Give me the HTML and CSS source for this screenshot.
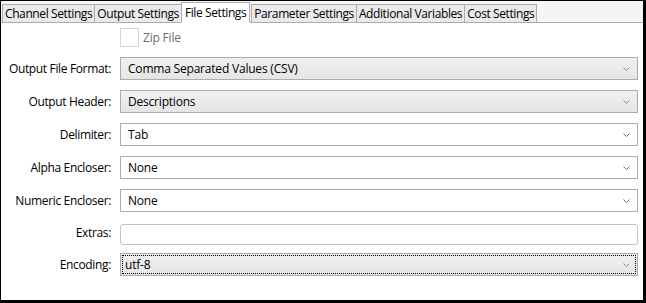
FILE: index.html
```html
<!DOCTYPE html>
<html lang="en">
<head>
  <meta charset="UTF-8">
  <title>File Settings</title>
  <link rel="stylesheet" href="styles.css">
</head>
<body>
  <div class="window">
    <div class="tabs">
      <div class="tab">Channel Settings</div>
      <div class="tab">Output Settings</div>
      <div class="tab active">File Settings</div>
      <div class="tab">Parameter Settings</div>
      <div class="tab">Additional Variables</div>
      <div class="tab">Cost Settings</div>
    </div>

    <div class="panel">
      <div class="form">
        <span></span>
        <label class="check"><span class="box"></span>Zip File</label>

        <span class="lbl">Output File Format:</span>
        <div class="combo disabled">Comma Separated Values (CSV)<svg class="arrow" width="7" height="4" viewBox="0 0 7 4"><polyline points="0.5,0.5 3.5,3.5 6.5,0.5" fill="none" stroke="#8a8a8a" stroke-width="1"/></svg></div>

        <span class="lbl">Output Header:</span>
        <div class="combo disabled">Descriptions<svg class="arrow" width="7" height="4" viewBox="0 0 7 4"><polyline points="0.5,0.5 3.5,3.5 6.5,0.5" fill="none" stroke="#8a8a8a" stroke-width="1"/></svg></div>

        <span class="lbl">Delimiter:</span>
        <div class="combo">Tab<svg class="arrow" width="7" height="4" viewBox="0 0 7 4"><polyline points="0.5,0.5 3.5,3.5 6.5,0.5" fill="none" stroke="#707070" stroke-width="1"/></svg></div>

        <span class="lbl">Alpha Encloser:</span>
        <div class="combo">None<svg class="arrow" width="7" height="4" viewBox="0 0 7 4"><polyline points="0.5,0.5 3.5,3.5 6.5,0.5" fill="none" stroke="#707070" stroke-width="1"/></svg></div>

        <span class="lbl">Numeric Encloser:</span>
        <div class="combo">None<svg class="arrow" width="7" height="4" viewBox="0 0 7 4"><polyline points="0.5,0.5 3.5,3.5 6.5,0.5" fill="none" stroke="#707070" stroke-width="1"/></svg></div>

        <span class="lbl">Extras:</span>
        <div class="textbox"></div>

        <span class="lbl">Encoding:</span>
        <div class="combo disabled focus"><span class="focusrect">utf-8<svg class="arrow" width="7" height="4" viewBox="0 0 7 4"><polyline points="0.5,0.5 3.5,3.5 6.5,0.5" fill="none" stroke="#8a8a8a" stroke-width="1"/></svg></span></div>
      </div>
    </div>
  </div>
</body>
</html>
```

FILE: styles.css
```css
* {
  box-sizing: border-box;
}
body {
  margin: 0;
  font-family: "Open Sans", "Noto Sans", sans-serif;
  font-size: 12px;
  color: #000;
}
.window {
  width: 646px;
  height: 303px;
  border-top: 1px solid #000;
  border-left: 1px solid #000;
  border-right: 3px solid #000;
  border-bottom: 3px solid #000;
  background: #f5f5f5;
  display: flex;
  flex-direction: column;
}
.tabs {
  display: flex;
  align-items: flex-end;
  height: 22px;
  padding-left: 1px;
  border-bottom: 1px solid #acacac;
}
.tab {
  height: 19px;
  margin-bottom: -1px;
  padding: 0 2px;
  line-height: 17px;
  background: #eaeaea;
  border: 1px solid #acacac;
  border-right: none;
  white-space: nowrap;
  letter-spacing: -0.4px;
}
.tab:last-child {
  border-right: 1px solid #acacac;
}
.tab.active {
  height: 21px;
  background: #fff;
  border: 1px solid #acacac;
  border-bottom-color: #fff;
  padding: 0 3px;
  line-height: 19px;
  margin-right: 1px;
}
.tab.active + .tab {
  border-left: 1px solid #acacac;
}
.panel {
  flex: 1;
  background: #fff;
  padding: 5px 5px 0 7px;
}
.form {
  display: grid;
  grid-template-columns: 103px 1fr;
  column-gap: 9px;
  row-gap: 10px;
  align-items: center;
}
.lbl {
  text-align: right;
  white-space: nowrap;
  letter-spacing: -0.35px;
}
.check {
  display: flex;
  align-items: center;
  gap: 4px;
  color: #6d6d6d;
  height: 19px;
  letter-spacing: -0.2px;
}
.box {
  width: 19px;
  height: 19px;
  border: 1px solid #d5d5d5;
  background: #fff;
}
.combo {
  position: relative;
  height: 23px;
  border: 1px solid #acacac;
  background: #fff;
  padding-left: 7px;
  line-height: 21px;
  letter-spacing: -0.2px;
}
.combo.disabled {
  background: linear-gradient(#f0f0f0, #e5e5e5);
}
.arrow {
  position: absolute;
  right: 7px;
  top: 9px;
}
.combo.focus {
  padding: 1px;
}
.focusrect {
  display: block;
  position: relative;
  height: 19px;
  border: 1px dotted #000;
  padding-left: 2px;
  line-height: 17px;
}
.focusrect .arrow {
  right: 5px;
  top: 7px;
}
.textbox {
  height: 21px;
  border: 1px solid #c4c4c4;
  border-radius: 3px;
  background: #fff;
  margin: 2px 0 -2px;
}
```
